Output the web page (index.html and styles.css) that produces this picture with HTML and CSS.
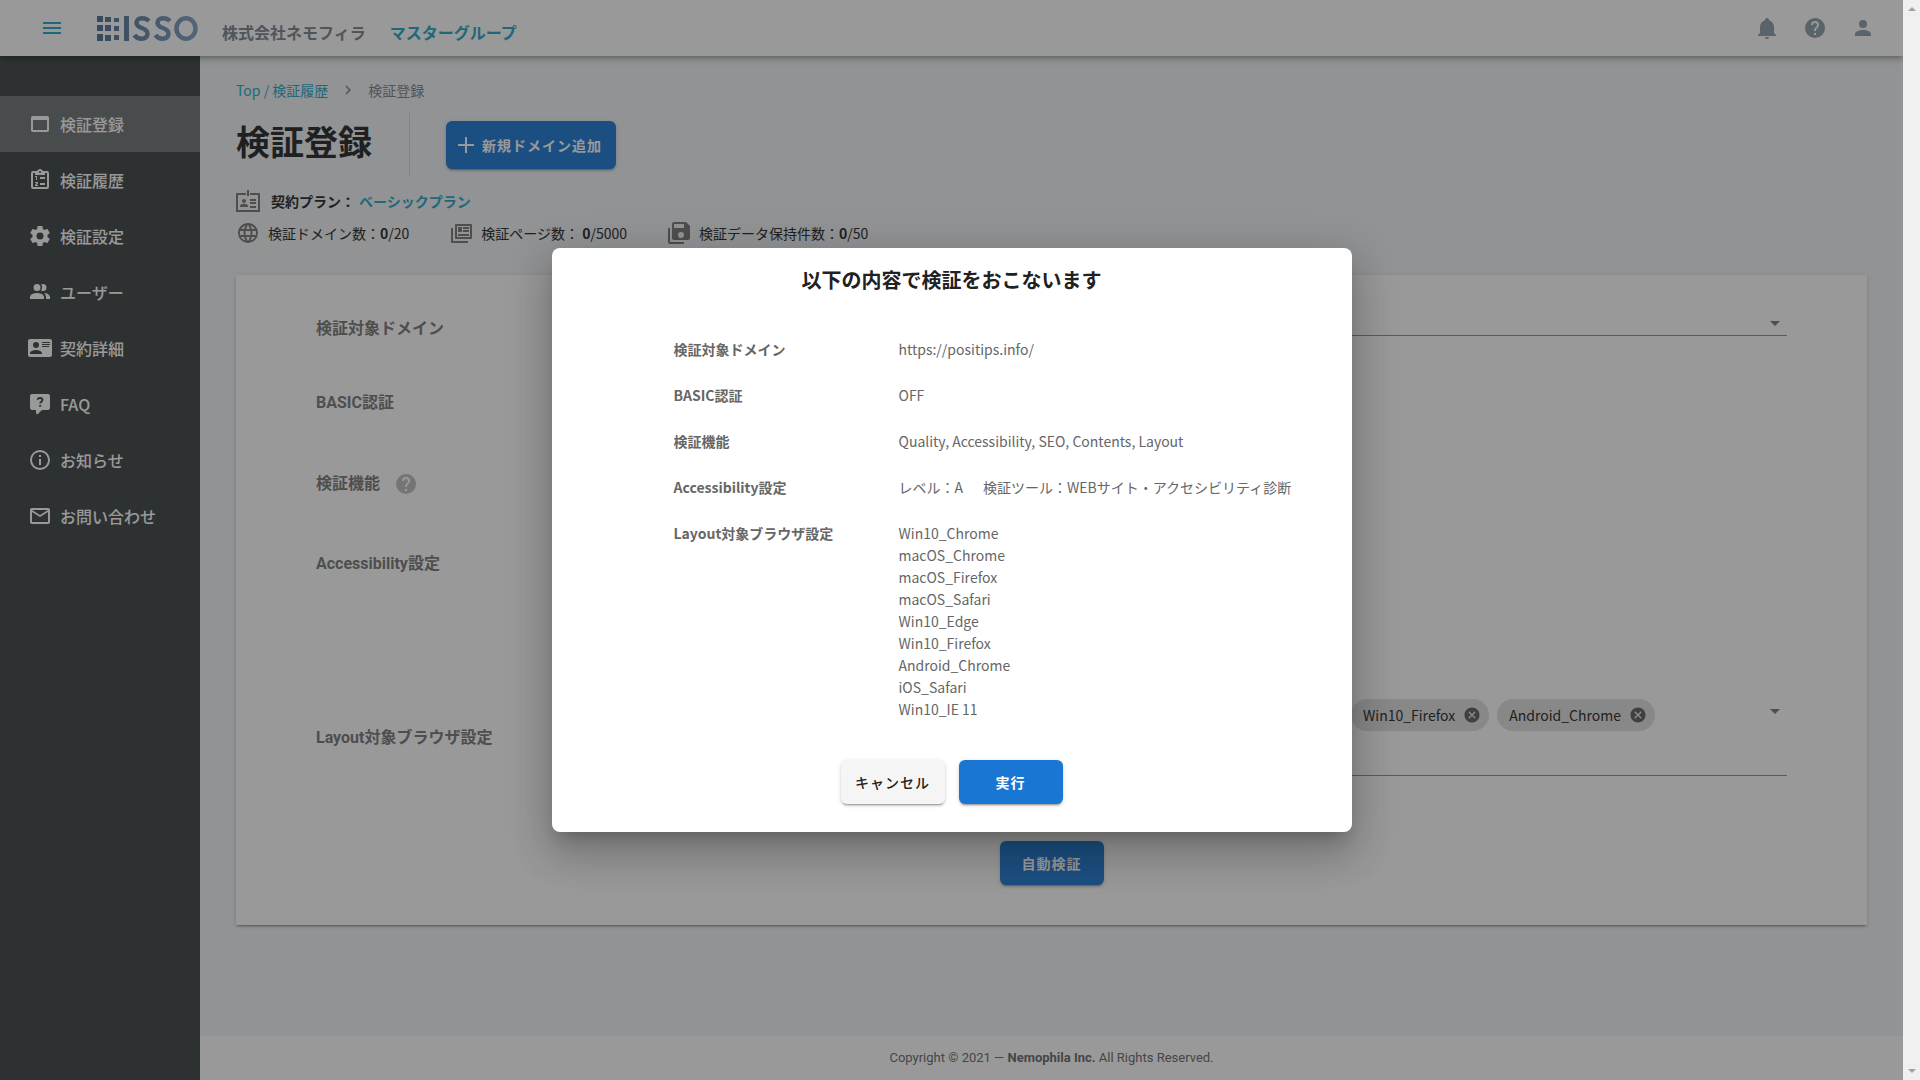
FILE: index.html
```html
<!DOCTYPE html>
<html lang="ja">
<head>
<meta charset="utf-8">
<title>検証登録</title>
<link rel="stylesheet" href="styles.css">
</head>
<body>
<div class="app">
  <header class="header">
    <button class="icon-btn menu" aria-label="menu"><svg class="icon" viewBox="0 0 24 24"><path d="M3,6H21V8H3V6M3,11H21V13H3V11M3,16H21V18H3V16Z"/></svg></button>
    <svg class="logo" viewBox="0 0 101 25" aria-label="ISSO">
      <defs><linearGradient id="lg" gradientUnits="userSpaceOnUse" x1="0" y1="0" x2="101" y2="0"><stop offset="0" stop-color="#4c6c90"/><stop offset="1" stop-color="#7c9fc4"/></linearGradient></defs>
      <g fill="url(#lg)"><path d="M0 0h6v6H0zM8 1h6v5H8zM17 2h5v4h-5zM0 9h6v6H0zM8 9h6v6H8zM17 10h5v5h-5zM0 18h6v7H0zM8 19h6v6H8zM17 19h5v5h-5zM27 0h5v25h-5z"/></g>
      <g fill="none" stroke="url(#lg)" stroke-width="4.500"><path d="M52 5C50 3 47.500 2.300 45 2.300C41.500 2.300 39.500 4.500 39.500 7C39.500 13 50.500 11 50.500 17.500C50.500 21 48 22.700 44.500 22.700C41.500 22.700 39 21.500 37.500 19"/><path d="M73 5C71 3 68.500 2.300 66 2.300C62.500 2.300 60.500 4.500 60.500 7C60.500 13 71.500 11 71.500 17.500C71.500 21 69 22.700 65.500 22.700C62.500 22.700 60 21.500 58.500 19"/><ellipse cx="89" cy="12.500" rx="9.500" ry="10.200"/></g>
    </svg>
    <span class="company">株式会社ネモフィラ</span>
    <a class="group" href="#">マスターグループ</a>
    <div class="header-actions">
      <button class="icon-btn" aria-label="notifications"><svg class="icon" viewBox="0 0 24 24"><path d="M21,19V20H3V19L5,17V11C5,7.900 7.030,5.170 10,4.290C10,4.190 10,4.100 10,4A2,2 0 0,1 12,2A2,2 0 0,1 14,4C14,4.100 14,4.190 14,4.290C16.970,5.170 19,7.900 19,11V17L21,19M14,21A2,2 0 0,1 12,23A2,2 0 0,1 10,21"/></svg></button>
      <button class="icon-btn" aria-label="help"><svg class="icon" viewBox="0 0 24 24"><path d="M15.070,11.250L14.170,12.170C13.450,12.890 13,13.500 13,15H11V14.500C11,13.390 11.450,12.390 12.170,11.670L13.410,10.410C13.780,10.050 14,9.550 14,9C14,7.890 13.100,7 12,7A2,2 0 0,0 10,9H8A4,4 0 0,1 12,5A4,4 0 0,1 16,9C16,9.880 15.640,10.670 15.070,11.250M13,19H11V17H13M12,2A10,10 0 0,0 2,12A10,10 0 0,0 12,22A10,10 0 0,0 22,12C22,6.470 17.500,2 12,2Z"/></svg></button>
      <button class="icon-btn" aria-label="account"><svg class="icon" viewBox="0 0 24 24"><path d="M12,4A4,4 0 0,1 16,8A4,4 0 0,1 12,12A4,4 0 0,1 8,8A4,4 0 0,1 12,4M12,14C16.420,14 20,15.790 20,18V20H4V18C4,15.790 7.580,14 12,14Z"/></svg></button>
    </div>
  </header>
  <div class="body">
    <nav class="sidebar">
      <a class="nav-item active" href="#"><svg class="icon" viewBox="0 0 24 24"><path d="M19,4C20.110,4 21,4.900 21,6V18A2,2 0 0,1 19,20H5C3.890,20 3,19.100 3,18V6A2,2 0 0,1 5,4H19M19,18V8H5V18H19Z"/></svg>検証登録</a>
      <a class="nav-item" href="#"><svg class="icon" viewBox="0 0 24 24"><path fill-rule="evenodd" d="M19,3H14.820C14.400,1.840 13.300,1 12,1C10.700,1 9.600,1.840 9.180,3H5A2,2 0 0,0 3,5V19A2,2 0 0,0 5,21H19A2,2 0 0,0 21,19V5A2,2 0 0,0 19,3M12,3A1,1 0 0,1 12,5A1,1 0 0,1 12,3M7,7H17V5H19V19H5V5H7V7Z"/><path d="M12 9h5v2h-5zM12 15h5v2h-5zM7 8h2v4H8V9H7zM7 14h3v1.500L8.300 17H10v1H7v-1l1.700-2H7z"/></svg>検証履歴</a>
      <a class="nav-item" href="#"><svg class="icon" viewBox="0 0 24 24"><path d="M12,15.500A3.500,3.500 0 0,1 8.500,12A3.500,3.500 0 0,1 12,8.500A3.500,3.500 0 0,1 15.500,12A3.500,3.500 0 0,1 12,15.500M19.430,12.970C19.470,12.650 19.500,12.330 19.500,12C19.500,11.670 19.470,11.340 19.430,11L21.540,9.370C21.730,9.220 21.780,8.950 21.660,8.730L19.660,5.270C19.540,5.050 19.270,4.960 19.050,5.050L16.560,6.050C16.040,5.660 15.500,5.320 14.870,5.070L14.500,2.420C14.460,2.180 14.250,2 14,2H10C9.750,2 9.540,2.180 9.500,2.420L9.130,5.070C8.500,5.320 7.960,5.660 7.440,6.050L4.950,5.050C4.730,4.960 4.460,5.050 4.340,5.270L2.340,8.730C2.210,8.950 2.270,9.220 2.460,9.370L4.570,11C4.530,11.340 4.500,11.670 4.500,12C4.500,12.330 4.530,12.650 4.570,12.970L2.460,14.630C2.270,14.780 2.210,15.050 2.340,15.270L4.340,18.730C4.460,18.950 4.730,19.030 4.950,18.950L7.440,17.940C7.960,18.340 8.500,18.680 9.130,18.930L9.500,21.580C9.540,21.820 9.750,22 10,22H14C14.250,22 14.460,21.820 14.500,21.580L14.870,18.930C15.500,18.670 16.040,18.340 16.560,17.940L19.050,18.950C19.270,19.030 19.540,18.950 19.660,18.730L21.660,15.270C21.780,15.050 21.730,14.780 21.540,14.630L19.430,12.970Z"/></svg>検証設定</a>
      <a class="nav-item" href="#"><svg class="icon" viewBox="0 0 24 24"><path d="M13.070 10.410A5 5 0 0 0 13.070 4.590A3.390 3.390 0 0 1 15 4A3.500 3.500 0 0 1 15 11A3.390 3.390 0 0 1 13.070 10.410M5.500 7.500A3.500 3.500 0 1 1 9 11A3.500 3.500 0 0 1 5.500 7.500M16 17V19H2V17S2 13 9 13 16 17 16 17M15.950 13A5.320 5.320 0 0 1 18 17V19H22V17S22 13.370 15.940 13Z"/></svg>ユーザー</a>
      <a class="nav-item" href="#"><svg class="icon" viewBox="0 0 24 24"><path d="M2,3H22C23.050,3 24,3.950 24,5V19C24,20.050 23.050,21 22,21H2C0.950,21 0,20.050 0,19V5C0,3.950 0.950,3 2,3M14,6V7H22V6H14M14,8V9H21.500L22,9V8H14M14,10V11H21V10H14M8,13.910C6,13.910 2,15 2,17V18H14V17C14,15 10,13.910 8,13.910M8,6A3,3 0 0,0 5,9A3,3 0 0,0 8,12A3,3 0 0,0 11,9A3,3 0 0,0 8,6Z"/></svg>契約詳細</a>
      <a class="nav-item" href="#"><svg class="icon" viewBox="0 0 24 24"><path d="M4,2A2,2 0 0,0 2,4V16A2,2 0 0,0 4,18H8V21A1,1 0 0,0 9,22H9.500C9.750,22 10,21.900 10.200,21.710L13.900,18H20A2,2 0 0,0 22,16V4C22,2.890 21.100,2 20,2H4Z"/><path class="cut" d="M9.700 7.800C9.700 5.400 14.400 5.400 14.400 8C14.400 9.800 12.200 9.700 12.200 11.600M12.200 13v1.800"/></svg>FAQ</a>
      <a class="nav-item" href="#"><svg class="icon" viewBox="0 0 24 24"><path d="M11,9H13V7H11M12,20C7.590,20 4,16.410 4,12C4,7.590 7.590,4 12,4C16.410,4 20,7.590 20,12C20,16.410 16.410,20 12,20M12,2A10,10 0 0,0 2,12A10,10 0 0,0 12,22A10,10 0 0,0 22,12A10,10 0 0,0 12,2M11,17H13V11H11V17Z"/></svg>お知らせ</a>
      <a class="nav-item" href="#"><svg class="icon" viewBox="0 0 24 24"><path d="M22 6C22 4.900 21.100 4 20 4H4C2.900 4 2 4.900 2 6V18C2 19.100 2.900 20 4 20H20C21.100 20 22 19.100 22 18V6M20 6L12 11L4 6H20M20 18H4V8L12 13L20 8V18Z"/></svg>お問い合わせ</a>
    </nav>
    <div class="page">
      <main class="main">
        <div class="crumbs"><a href="#">Top / 検証履歴</a><svg class="chevron" viewBox="0 0 24 24"><path d="M8.590,16.580L13.170,12L8.590,7.410L10,6L16,12L10,18L8.590,16.580Z"/></svg><span>検証登録</span></div>
        <div class="title-row">
          <h1>検証登録</h1>
          <button class="btn primary add"><svg class="plus" viewBox="0 0 24 24"><path d="M20 13H13V20H11V13H4V11H11V4H13V11H20V13Z"/></svg>新規ドメイン追加</button>
        </div>
        <div class="plan">
          <svg class="icon" viewBox="0 0 24 24"><g fill="none" stroke="currentColor" stroke-width="2"><path d="M10 5H1v17h22V5h-9M12 1v6"/></g><circle cx="8" cy="12" r="2"/><path d="M4 18v-1c0-3 8-3 8 0v1zM14 10h6v2h-6zM14 13h6v2h-6zM14 17h6v2h-6z"/></svg>
          <b>契約プラン：</b><a href="#">ベーシックプラン</a>
        </div>
        <div class="stats">
          <span class="stat"><svg class="icon" viewBox="0 0 24 24"><path d="M16.360,14C16.440,13.340 16.500,12.680 16.500,12C16.500,11.320 16.440,10.660 16.360,10H19.740C19.900,10.640 20,11.310 20,12C20,12.690 19.900,13.360 19.740,14M14.590,19.560C15.190,18.450 15.650,17.250 15.970,16H18.920C17.960,17.650 16.430,18.930 14.590,19.560M14.340,14H9.660C9.560,13.340 9.500,12.680 9.500,12C9.500,11.320 9.560,10.650 9.660,10H14.340C14.430,10.650 14.500,11.320 14.500,12C14.500,12.680 14.430,13.340 14.340,14M12,19.960C11.170,18.760 10.500,17.430 10.090,16H13.910C13.500,17.430 12.830,18.760 12,19.960M8,8H5.080C6.030,6.340 7.570,5.060 9.400,4.440C8.800,5.550 8.350,6.750 8,8M5.080,16H8C8.350,17.250 8.800,18.450 9.400,19.560C7.570,18.930 6.030,17.650 5.080,16M4.260,14C4.100,13.360 4,12.690 4,12C4,11.310 4.100,10.640 4.260,10H7.640C7.560,10.660 7.500,11.320 7.500,12C7.500,12.680 7.560,13.340 7.640,14M12,4.030C12.830,5.230 13.500,6.570 13.910,8H10.090C10.500,6.570 11.170,5.230 12,4.030M18.920,8H15.970C15.650,6.750 15.190,5.550 14.590,4.440C16.430,5.070 17.960,6.340 18.920,8M12,2C6.470,2 2,6.500 2,12A10,10 0 0,0 12,22A10,10 0 0,0 22,12C22,6.470 17.500,2 12,2Z"/></svg><span>検証ドメイン数：<b>0</b>/20</span></span>
          <span class="stat"><svg class="icon" viewBox="0 0 24 24"><g fill="none" stroke="currentColor" stroke-width="2" stroke-linejoin="round"><path d="M7 4h15v13H7zM3 7v14h16"/></g><path d="M9 6h4v5H9zM14 6h6v2h-6zM14 9h6v2h-6zM9 13h11v2H9z"/></svg><span>検証ページ数： <b>0</b>/5000</span></span>
          <span class="stat"><svg class="icon" viewBox="0 0 24 24"><path d="M17,7V3H7V7H17M14,17A3,3 0 0,0 17,14A3,3 0 0,0 14,11A3,3 0 0,0 11,14A3,3 0 0,0 14,17M19,1L23,5V17A2,2 0 0,1 21,19H7C5.890,19 5,18.100 5,17V3A2,2 0 0,1 7,1H19M1,7H3V21H17V23H3A2,2 0 0,1 1,21V7Z"/></svg><span>検証データ保持件数：<b>0</b>/50</span></span>
        </div>
        <form class="card">
          <div class="row domain"><label for="domain">検証対象ドメイン</label>
            <div class="control"><select id="domain"></select><svg class="icon arrow" viewBox="0 0 24 24"><path d="M7,10L12,15L17,10H7Z"/></svg></div></div>
          <div class="row basic"><span>BASIC認証</span></div>
          <div class="row feature"><span>検証機能</span><button type="button" class="icon-btn help" aria-label="help"><svg class="icon" viewBox="0 0 24 24"><path d="M15.070,11.250L14.170,12.170C13.450,12.890 13,13.500 13,15H11V14.500C11,13.390 11.450,12.390 12.170,11.670L13.410,10.410C13.780,10.050 14,9.550 14,9C14,7.890 13.100,7 12,7A2,2 0 0,0 10,9H8A4,4 0 0,1 12,5A4,4 0 0,1 16,9C16,9.880 15.640,10.670 15.070,11.250M13,19H11V17H13M12,2A10,10 0 0,0 2,12A10,10 0 0,0 12,22A10,10 0 0,0 22,12C22,6.470 17.500,2 12,2Z"/></svg></button></div>
          <div class="row access"><span>Accessibility設定</span></div>
          <div class="row browsers"><span>Layout対象ブラウザ設定</span>
            <div class="control">
              <div class="chips">
                <span class="chip">Win10_Firefox<button type="button" class="icon-btn" aria-label="remove"><svg class="close" viewBox="0 0 24 24"><path d="M12,2C17.530,2 22,6.470 22,12C22,17.530 17.530,22 12,22C6.470,22 2,17.530 2,12C2,6.470 6.470,2 12,2M15.590,7L12,10.590L8.410,7L7,8.410L10.590,12L7,15.590L8.410,17L12,13.410L15.590,17L17,15.590L13.410,12L17,8.410L15.590,7Z"/></svg></button></span>
                <span class="chip">Android_Chrome<button type="button" class="icon-btn" aria-label="remove"><svg class="close" viewBox="0 0 24 24"><path d="M12,2C17.530,2 22,6.470 22,12C22,17.530 17.530,22 12,22C6.470,22 2,17.530 2,12C2,6.470 6.470,2 12,2M15.590,7L12,10.590L8.410,7L7,8.410L10.590,12L7,15.590L8.410,17L12,13.410L15.590,17L17,15.590L13.410,12L17,8.410L15.590,7Z"/></svg></button></span>
              </div>
              <button type="button" class="icon-btn arrow" aria-label="open"><svg class="icon" viewBox="0 0 24 24"><path d="M7,10L12,15L17,10H7Z"/></svg></button>
            </div></div>
          <button type="button" class="btn primary submit">自動検証</button>
        </form>
      </main>
      <footer class="footer">Copyright © 2021 — <b>Nemophila Inc.</b> All Rights Reserved.</footer>
    </div>
  </div>
  <div class="overlay">
    <section class="dialog" role="dialog" aria-labelledby="dialog-title">
      <h2 id="dialog-title">以下の内容で検証をおこないます</h2>
      <dl class="summary">
        <dt>検証対象ドメイン</dt><dd>https://positips.info/</dd>
        <dt>BASIC認証</dt><dd>OFF</dd>
        <dt>検証機能</dt><dd>Quality, Accessibility, SEO, Contents, Layout</dd>
        <dt>Accessibility設定</dt><dd class="pair"><span>レベル：A</span><span>検証ツール：WEBサイト・アクセシビリティ診断</span></dd>
        <dt>Layout対象ブラウザ設定</dt>
        <dd><ul><li>Win10_Chrome</li><li>macOS_Chrome</li><li>macOS_Firefox</li><li>macOS_Safari</li><li>Win10_Edge</li><li>Win10_Firefox</li><li>Android_Chrome</li><li>iOS_Safari</li><li>Win10_IE 11</li></ul></dd>
      </dl>
      <div class="actions"><button class="btn plain">キャンセル</button><button class="btn primary">実行</button></div>
    </section>
  </div>
</div>
<div class="scrollbar" aria-hidden="true"><i class="up"></i><i class="down"></i></div>
</body>
</html>
```
FILE: styles.css
```css
* { box-sizing: border-box; }
body {
  margin: 0;
  display: flex;
  min-height: 100vh;
  font: 14px/20px "Noto Sans CJK JP", sans-serif;
  color: #212121;
}
a { color: #1da5c8; text-decoration: none; }
button { font: inherit; border: 0; cursor: pointer; }
.icon { width: 24px; height: 24px; fill: currentColor; flex: none; display: block; }
.icon-btn { background: none; padding: 0; color: inherit; display: block; }

.app { position: relative; flex: 1; display: flex; flex-direction: column; min-width: 0; overflow: hidden; }

.header {
  position: relative;
  height: 56px;
  flex: none;
  display: flex;
  align-items: center;
  padding: 0 28px 0 40px;
  background: #fff;
  box-shadow: 0 2px 4px -1px rgba(0,0,0,.2), 0 4px 5px rgba(0,0,0,.14), 0 1px 10px rgba(0,0,0,.12);
  z-index: 1;
}
.menu { color: #1da5c8; margin-right: 33px; }
.logo { width: 101px; height: 25px; margin-right: 24px; }
.company, .group { font-size: 16px; font-weight: 700; padding-top: 8px; }
.company { color: #78828c; margin-right: 24px; }
.header-actions { margin-left: auto; display: flex; gap: 24px; color: #8a9ba8; }

.body { flex: 1; display: flex; }
.sidebar { width: 200px; flex: none; padding-top: 40px; background: #394042; }
.nav-item {
  display: flex;
  align-items: center;
  gap: 8px;
  height: 56px;
  padding-left: 28px;
  color: #fff;
  font-size: 16px;
  font-weight: 500;
}
.nav-item.active { background: #6b7274; }
.cut { fill: none; stroke: #394042; stroke-width: 2; }

.page { flex: 1; display: flex; flex-direction: column; min-width: 0; background: #f0f4f8; }
.main { flex: 1; padding: 24px 36px; }
.crumbs { display: flex; align-items: center; gap: 11px; color: #78828c; }
.chevron { width: 18px; height: 18px; fill: currentColor; }
.title-row { display: flex; align-items: center; height: 64px; margin-top: 13px; }
h1 {
  margin: 0;
  padding: 0 37px 8px 0;
  font-size: 34px;
  line-height: 56px;
  border-right: 1px solid #d4d8dc;
}
.btn {
  display: flex;
  align-items: center;
  justify-content: center;
  min-width: 104px;
  height: 44px;
  padding: 0 12px;
  border-radius: 6px;
  font-weight: 700;
  letter-spacing: 1px;
  box-shadow: 0 3px 1px -2px rgba(0,0,0,.2), 0 2px 2px rgba(0,0,0,.14), 0 1px 5px rgba(0,0,0,.12);
}
.primary { background: #1976d2; color: #fff; }
.plain { background: #f5f5f5; color: #212121; font-weight: 500; }
.add { height: 48px; margin-left: 36px; gap: 4px; padding: 0 14px 0 8px; }
.plus { width: 24px; height: 24px; fill: currentColor; }
.plan, .stat { display: flex; align-items: center; gap: 8px; }
.plan { margin-top: 12px; }
.plan b { margin-left: 3px; }
.plan a { font-weight: 700; margin-left: -4px; }
.plan .icon, .stat .icon { color: #757575; }
.stats { display: flex; gap: 40px; margin-top: 8px; }

.card {
  display: flex;
  flex-direction: column;
  margin: 30px 0 0;
  padding: 21px 80px 40px;
  background: #fff;
  box-shadow: 0 3px 1px -2px rgba(0,0,0,.2), 0 2px 2px rgba(0,0,0,.14), 0 1px 5px rgba(0,0,0,.12);
}
.row { display: flex; align-items: center; color: #757575; font: 700 16px/24px Roboto, "Noto Sans CJK JP", sans-serif; }
.row > label, .row > span { flex: none; }
.domain { height: 66px; }
.basic { height: 82px; }
.feature { height: 80px; gap: 14px; }
.help { color: #bdbdbd; }
.access { height: 147px; align-items: flex-start; padding-top: 28px; }
.browsers { height: 134px; }
.control {
  flex: 1;
  display: flex;
  align-items: flex-start;
  justify-content: flex-end;
  margin-left: 160px;
  border-bottom: 1px solid #8c8c8c;
}
.domain .control { height: 28px; margin-top: -14px; }
.browsers .control { height: 80px; gap: 108px; margin-top: -4px; }
#domain { flex: 1; height: 24px; appearance: none; border: 0; background: none; }
.arrow { color: #757575; margin-top: 3px; }
.chips { display: flex; gap: 8px; padding-top: 3px; }
.chip {
  display: flex;
  align-items: center;
  gap: 8px;
  height: 32px;
  padding: 0 8px 0 12px;
  border-radius: 16px;
  background: #e0e0e0;
  color: #212121;
  font: 14px/20px "Noto Sans CJK JP", sans-serif;
}
.close { display: block; width: 18px; height: 18px; fill: #5c5c5c; }
.submit { align-self: center; margin-top: 36px; }

.footer {
  height: 44px;
  display: flex;
  align-items: center;
  justify-content: center;
  background: #fff;
  color: #666;
  font: 13px/20px Roboto, sans-serif;
  white-space: pre;
}

.overlay {
  position: absolute;
  inset: 0;
  z-index: 2;
  display: flex;
  align-items: center;
  justify-content: center;
  background: rgba(33,33,33,.46);
}
.dialog {
  width: 800px;
  padding: 16px 0 28px;
  border-radius: 8px;
  background: #fff;
  box-shadow: 0 11px 15px -7px rgba(0,0,0,.2), 0 24px 38px 3px rgba(0,0,0,.14), 0 9px 46px 8px rgba(0,0,0,.12);
}
.dialog h2 { margin: 0 0 30px; font-size: 20px; line-height: 32px; text-align: center; font-weight: 700; }
.summary {
  display: grid;
  grid-template-columns: 225px 1fr;
  margin: 0 0 28px;
  padding-left: 122px;
  line-height: 22px;
  color: #666;
}
.summary dt { padding: 12px 0; font-weight: 700; }
.summary dd { margin: 0; padding: 12px 0; }
.summary ul { list-style: none; margin: 0; padding: 0; }
.pair { display: flex; gap: 20px; }
.actions { display: flex; justify-content: center; gap: 14px; }

.scrollbar {
  width: 17px;
  flex: none;
  display: flex;
  flex-direction: column;
  justify-content: space-between;
  align-items: center;
  padding: 7px 0;
  background: #f0f0f0;
}
.up, .down { border: solid transparent; }
.up { border-width: 0 4px 4px; border-bottom-color: #a3a3a3; }
.down { border-width: 4px 4px 0; border-top-color: #a3a3a3; }
```
